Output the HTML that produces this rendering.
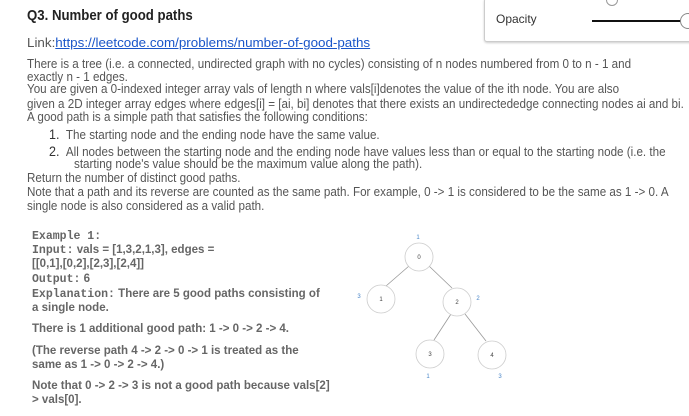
<!DOCTYPE html>
<html><head><meta charset="utf-8"><style>
body{margin:0;width:689px;height:416px;background:#fff;overflow:hidden;position:relative;font-family:"Liberation Sans",sans-serif;}
.l{position:absolute;white-space:nowrap;transform-origin:0 0;color:#555;font-size:13px;}
.c{transform:scaleX(0.895);}
.t{position:absolute;left:27px;top:7px;font-size:15px;font-weight:bold;color:#222;transform:scaleX(0.88);transform-origin:0 0;white-space:nowrap;}
.m{font-family:"Liberation Mono",monospace;font-weight:bold;color:#666;}
.e{font-size:12px;font-weight:bold;color:#666;transform:scaleX(0.96);}
</style></head><body>
<div class="t">Q3. Number of good paths</div>
<div style="position:absolute;left:484px;top:-2px;width:210px;height:42px;border:1px solid #ccc;border-radius:3px;box-shadow:0 1px 2px rgba(0,0,0,.2);background:#fff"></div>
<div class="l" style="left:496px;top:12px;font-size:12px;color:#333">Opacity</div>
<div style="position:absolute;left:606px;top:-6px;width:10px;height:10px;border:1px solid #999;border-radius:50%"></div>
<div style="position:absolute;left:592px;top:20px;width:90px;height:2px;background:#111"></div>
<div style="position:absolute;left:680px;top:13px;width:14px;height:14px;border:1px solid #888;border-radius:50%;background:#fff"></div>

<div class="l" style="left:27px;top:35px;font-size:13px;transform:scaleX(1.03)">Link:<span style="color:#1a56c9;text-decoration:underline">https://leetcode.com/problems/number-of-good-paths</span></div>
<div class="l c" style="left:27px;top:56px">There is a tree (i.e. a connected, undirected graph with no cycles) consisting of n nodes numbered from 0 to n - 1 and</div>
<div class="l c" style="left:27px;top:69px">exactly n - 1 edges.</div>
<div class="l c" style="left:27px;top:81px">You are given a 0-indexed integer array vals of length n where vals[i]denotes the value of the ith node. You are also</div>
<div class="l c" style="left:27px;top:96px">given a 2D integer array edges where edges[i] = [ai, bi] denotes that there exists an undirectededge connecting nodes ai and bi.</div>
<div class="l c" style="left:27px;top:109px">A good path is a simple path that satisfies the following conditions:</div>
<div class="l c" style="left:49px;top:126px"><span style="color:#333;font-size:14px">1.</span>&nbsp;&nbsp;The starting node and the ending node have the same value.</div>
<div class="l c" style="left:49px;top:143px"><span style="color:#333;font-size:14px">2.</span>&nbsp;&nbsp;All nodes between the starting node and the ending node have values less than or equal to the starting node (i.e. the</div>
<div class="l c" style="left:74px;top:156px">starting node's value should be the maximum value along the path).</div>
<div class="l c" style="left:27px;top:170px">Return the number of distinct good paths.</div>
<div class="l c" style="left:27px;top:184px">Note that a path and its reverse are counted as the same path. For example, 0 -&gt; 1 is considered to be the same as 1 -&gt; 0. A</div>
<div class="l c" style="left:27px;top:198px">single node is also considered as a valid path.</div>

<div class="l e" style="left:32px;top:228px"><span class="m">Example 1:</span></div>
<div class="l e" style="left:32px;top:242px"><span class="m">Input:</span> vals = [1,3,2,1,3], edges =</div>
<div class="l e" style="left:32px;top:256px">[[0,1],[0,2],[2,3],[2,4]]</div>
<div class="l e" style="left:32px;top:271px"><span class="m">Output:</span> 6</div>
<div class="l e" style="left:32px;top:286px"><span class="m">Explanation:</span> There are 5 good paths consisting of</div>
<div class="l e" style="left:32px;top:300px">a single node.</div>
<div class="l e" style="left:32px;top:321px">There is 1 additional good path: 1 -&gt; 0 -&gt; 2 -&gt; 4.</div>
<div class="l e" style="left:32px;top:343px">(The reverse path 4 -&gt; 2 -&gt; 0 -&gt; 1 is treated as the</div>
<div class="l e" style="left:32px;top:357px">same as 1 -&gt; 0 -&gt; 2 -&gt; 4.)</div>
<div class="l e" style="left:32px;top:378px">Note that 0 -&gt; 2 -&gt; 3 is not a good path because vals[2]</div>
<div class="l e" style="left:32px;top:392px">&gt; vals[0].</div>

<svg style="position:absolute;left:0;top:0" width="689" height="416" font-family="Liberation Sans,sans-serif" font-size="6">
<g stroke="#999" stroke-width="0.8">
<line x1="409" y1="266" x2="386" y2="286"/><line x1="429" y1="266" x2="452" y2="288"/>
<line x1="451" y1="314" x2="434" y2="340"/><line x1="465" y1="314" x2="486" y2="341"/>
</g>
<g fill="#fff" stroke="#ccc" stroke-width="0.8">
<circle cx="419" cy="257" r="14"/><circle cx="381" cy="299" r="14"/><circle cx="457" cy="302" r="14"/><circle cx="430" cy="354" r="14"/><circle cx="492" cy="355" r="14"/>
</g>
<g fill="#444" text-anchor="middle">
<text x="419" y="259">0</text><text x="381" y="301">1</text><text x="457" y="304">2</text><text x="430" y="356">3</text><text x="492" y="357">4</text>
</g>
<g fill="#4a86c8" text-anchor="middle">
<text x="418" y="239">1</text><text x="359" y="298">3</text><text x="478" y="300">2</text><text x="428" y="378">1</text><text x="500" y="378">3</text>
</g>
</svg>
</body></html>
